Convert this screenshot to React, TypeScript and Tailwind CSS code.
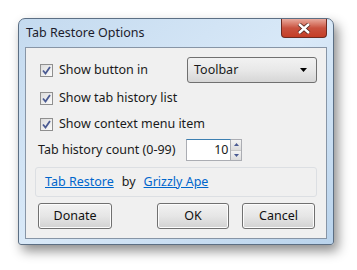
import * as React from "react";

const font = { fontFamily: '"Noto Sans", "Liberation Sans", sans-serif' };

function CheckBox() {
  return (
    <span className="relative inline-flex h-[13px] w-[13px] items-center justify-center border border-[#8f8f8f] bg-gradient-to-br from-[#dcdcdc] to-[#fbfbfb]">
      <svg width="9" height="9" viewBox="0 0 9 9">
        <path d="M1 4.5 L3.5 7.5 L8 1" stroke="#4a5a92" strokeWidth="1.8" fill="none" />
      </svg>
    </span>
  );
}

function CheckRow({ label }: { label: string }) {
  return (
    <label className="flex items-center gap-[6px]">
      <CheckBox />
      <span>{label}</span>
    </label>
  );
}

function Btn({ label, w }: { label: string; w: string }) {
  return (
    <button
      className={`${w} h-[26px] rounded-[3px] border border-[#707070] bg-gradient-to-b from-[#f2f2f2] via-[#e6e6e6] to-[#d2d2d2] text-[#111] shadow-[inset_0_0_0_1px_#fcfcfc]`}
    >
      {label}
    </button>
  );
}

export default function App() {
  return (
    <div className="h-[270px] w-[357px] bg-white pl-[18px] pt-[18px]" style={font}>
      <div className="flex h-[227px] w-[316px] flex-col rounded-t-[7px] rounded-b-[3px] border border-[#5c6f84] bg-gradient-to-br from-[#c4daef] via-[#d9e9f8] to-[#b9d3ec] shadow-[4px_6px_12px_rgba(0,0,0,0.45)]">
        <div className="flex h-[28px] items-start justify-between pl-[7px] pr-[6px]">
          <span className="pt-[5px] text-[12.5px] text-[#1c1c2c]">Tab Restore Options</span>
          <div className="flex h-[19px] w-[46px] items-center justify-center rounded-b-[4px] border border-t-0 border-[#6d2a20] bg-gradient-to-b from-[#e8a99d] via-[#c9523f] to-[#c43d25]">
            <svg width="14" height="11" viewBox="0 0 14 11">
              <path d="M2 1 L12 10 M12 1 L2 10" stroke="#4a2018" strokeWidth="4" />
              <path d="M2 1 L12 10 M12 1 L2 10" stroke="#fff" strokeWidth="2.4" />
            </svg>
          </div>
        </div>
        <div className="mx-[6px] mb-[5px] flex flex-1 flex-col border border-[#8795a6] bg-[#f0f0f0] px-[9px] pb-[9px] pt-[9px] text-[12.5px] text-[#1a1a1a]">
          <div className="flex h-[26px] items-center justify-between pl-[5px]">
            <CheckRow label="Show button in" />
            <div className="flex h-[26px] w-[130px] items-center justify-between rounded-[3px] border border-[#707070] bg-gradient-to-b from-[#f2f2f2] via-[#e8e8e8] to-[#d6d6d6] pl-[6px] pr-[9px]">
              <span>Toolbar</span>
              <svg width="7" height="4" viewBox="0 0 7 4">
                <path d="M0 0 H7 L3.5 4 Z" fill="#000" />
              </svg>
            </div>
          </div>
          <div className="mt-[5px] flex h-[20px] items-center pl-[5px]">
            <CheckRow label="Show tab history list" />
          </div>
          <div className="mt-[6px] flex h-[20px] items-center pl-[5px]">
            <CheckRow label="Show context menu item" />
          </div>
          <div className="mt-[5px] flex h-[22px] items-center gap-[11px] pl-[3px]">
            <span>Tab history count (0-99)</span>
            <div className="flex h-[22px]">
              <div className="flex w-[45px] items-center justify-end border border-[#abadb3] border-t-[#3c7fb1] bg-white pr-[2px]">
                10
              </div>
              <div className="flex w-[11px] flex-col border border-l-0 border-[#abadb3]">
                <div className="flex flex-1 items-center justify-center border-b border-[#c8c8c8] bg-gradient-to-b from-[#f4f4f4] to-[#dcdcdc]">
                  <svg width="5" height="3" viewBox="0 0 5 3"><path d="M0 3 H5 L2.5 0 Z" fill="#4a5a92" /></svg>
                </div>
                <div className="flex flex-1 items-center justify-center bg-gradient-to-b from-[#f4f4f4] to-[#dcdcdc]">
                  <svg width="5" height="3" viewBox="0 0 5 3"><path d="M0 0 H5 L2.5 3 Z" fill="#4a5a92" /></svg>
                </div>
              </div>
            </div>
          </div>
          <div className="mt-[6px] flex h-[30px] items-center gap-[8px] rounded-[3px] border border-[#dcdfe3] px-[9px]">
            <a className="text-[#0066cc] underline">Tab Restore</a>
            <span>by</span>
            <a className="text-[#0066cc] underline">Grizzly Ape</a>
          </div>
          <div className="mt-[6px] flex items-center pl-[3px]">
            <Btn label="Donate" w="w-[74px]" />
            <div className="ml-[45px]">
              <Btn label="OK" w="w-[72px]" />
            </div>
            <div className="ml-[13px]">
              <Btn label="Cancel" w="w-[73px]" />
            </div>
          </div>
        </div>
      </div>
    </div>
  );
}
